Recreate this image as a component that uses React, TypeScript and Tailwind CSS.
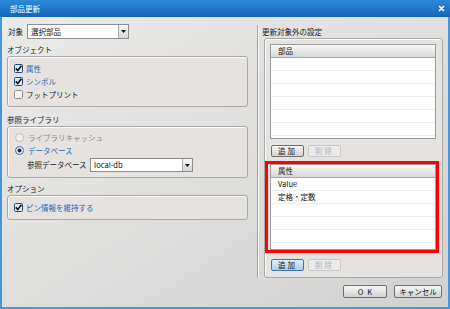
import React from "react";

const CheckBox = ({ checked }: { checked: boolean }) => (
    <svg width="9" height="9" viewBox="0 0 9 9" className="shrink-0">
        <rect x="0.5" y="0.5" width="8" height="8" rx="1" fill={checked ? "#dbe8f6" : "#f6f6f6"} stroke={checked ? "#234a7a" : "#8c8c8c"} />
        {checked && <path d="M1.8 4.4 L3.8 6.6 L7.4 1.8" fill="none" stroke="#111" strokeWidth="1.6" />}
    </svg>
);

const Radio = ({ checked, disabled }: { checked: boolean; disabled?: boolean }) => (
    <svg width="9" height="9" viewBox="0 0 9 9" className="shrink-0">
        <circle cx="4.5" cy="4.5" r="4" fill={disabled ? "#efefef" : "#e9eef5"} stroke={disabled ? "#bdbdbd" : "#4d6e96"} />
        {checked && <circle cx="4.5" cy="4.5" r="2" fill="#1b2b44" />}
    </svg>
);

const Select = ({ value, className }: { value: string; className: string }) => (
    <div className={"flex bg-white border border-[#8d8d8d] " + className}>
        <div className="flex-1 pl-[3px] flex items-center text-[#111]">{value}</div>
        <div className="w-[10px] border-l border-[#a8a8a8] bg-gradient-to-b from-[#f7f7f7] to-[#d6d6d6] flex items-center justify-center">
            <svg width="5" height="3" viewBox="0 0 5 3"><path d="M0 0 H5 L2.5 3 Z" fill="#111" /></svg>
        </div>
    </div>
);

const Btn = ({ label, kind, className }: { label: string; kind: "normal" | "disabled" | "focus"; className: string }) => {
    const look = {
        normal: "border-[#6f6f6f] bg-gradient-to-b from-[#f7f7f7] to-[#d3d3d3] text-[#111]",
        disabled: "border-[#c9c9c9] bg-[#ebebeb] text-[#b3b3b3]",
        focus: "border-[#3b78a8] bg-gradient-to-b from-[#e0eefb] to-[#a9cff0] text-[#111]",
    }[kind];
    return (
        <div className={"flex items-center justify-center border rounded-[2px] whitespace-nowrap " + look + " " + className}>
            {label}
        </div>
    );
};

const Table = ({ head, rows, className }: { head: string; rows: string[]; className: string }) => (
    <div className={"flex flex-col bg-white border border-[#9b9b9b] overflow-hidden " + className}>
        <div className="h-[13px] shrink-0 flex items-center pl-[7px] border-b border-[#a3a3a3] bg-gradient-to-b from-[#f9f9f9] to-[#d7d7d7] text-[#111]">{head}</div>
        {[0, 1, 2, 3, 4, 5].map((i) => (
            <div key={i} className="h-[13px] shrink-0 flex items-center pl-[7px] border-b border-[#ececec] text-[#111]">{rows[i] ?? ""}</div>
        ))}
    </div>
);

const Group = ({ children, className }: { children: React.ReactNode; className: string }) => (
    <div className={"border border-[#a9a9a9] rounded-[3px] bg-[#e6e2df] shadow-[inset_1px_1px_0_#fafafa] " + className}>{children}</div>
);

export default function App() {
    return (
        <div className="w-[450px] h-[309px] flex flex-col font-['Noto_Sans_CJK_JP',sans-serif] text-[7.5px] leading-none text-[#1a1a1a]">
            <div className="h-[17px] shrink-0 flex items-center justify-between pl-[10px] pr-[5px] bg-gradient-to-b from-[#2c89da] to-[#1366b7] text-white">
                <span>部品更新</span>
                <svg width="7" height="7" viewBox="0 0 7 7"><path d="M1 1 L6 6 M6 1 L1 6" stroke="#fff" strokeWidth="1.6" /></svg>
            </div>
            <div className="flex-1 flex flex-col border-2 border-t-0 border-[#4a95d8] bg-gradient-to-br from-[#ecebe9] to-[#d1d1d1] px-[5px]">
                <div className="h-[261px] flex">
                    {/* left */}
                    <div className="w-[241px] pt-[7px] flex flex-col">
                        <div className="h-[15px] flex items-center">
                            <span className="w-[20px] pl-[1px]">対象</span>
                            <Select value="選択部品" className="w-[102px] h-[15px]" />
                        </div>
                        <div className="mt-[5px] h-[12px] flex items-center">オブジェクト</div>
                        <Group className="h-[51px] pl-[6px] pt-[5px]">
                            <div className="h-[13px] flex items-center gap-[3px] text-[#2567b5]"><CheckBox checked /> 属性</div>
                            <div className="h-[13px] flex items-center gap-[3px] text-[#2567b5]"><CheckBox checked /> シンボル</div>
                            <div className="h-[13px] flex items-center gap-[3px]"><CheckBox checked={false} /> フットプリント</div>
                        </Group>
                        <div className="mt-[7px] h-[12px] flex items-center">参照ライブラリ</div>
                        <Group className="h-[52px] pl-[7px] pt-[4px]">
                            <div className="h-[13px] flex items-center gap-[4px] text-[#8c8c8c]"><Radio checked={false} disabled /> ライブラリキャッシュ</div>
                            <div className="h-[13px] flex items-center gap-[4px] text-[#2567b5]"><Radio checked /> データベース</div>
                            <div className="mt-[1px] h-[14px] flex items-center pl-[12px]">
                                <span className="w-[63px]">参照データベース</span>
                                <Select value="local-db" className="w-[103px] h-[14px]" />
                            </div>
                        </Group>
                        <div className="mt-[5px] h-[12px] flex items-center">オプション</div>
                        <Group className="h-[25px] pl-[6px] pt-[5px]">
                            <div className="h-[13px] flex items-center gap-[3px] text-[#2567b5]"><CheckBox checked /> ピン情報を維持する</div>
                        </Group>
                    </div>
                    {/* separator */}
                    <div className="ml-[9px] mt-[8px] w-[2px] border-l border-[#a2a2a2] bg-[#f7f7f7]" />
                    {/* right */}
                    <div className="ml-[5px] w-[179px] pt-[9px] flex flex-col">
                        <div className="h-[12px] flex items-center -ml-[2px]">更新対象外の設定</div>
                        <Group className="h-[240px] flex flex-col pt-[5px]">
                            <Table head="部品" rows={[]} className="ml-[5px] w-[166px] h-[95px]" />
                            <div className="mt-[6px] ml-[6px] flex gap-[4px]">
                                <Btn label="追加" kind="normal" className="w-[33px] h-[12px] tracking-[2px]" />
                                <Btn label="削除" kind="disabled" className="w-[33px] h-[12px] tracking-[2px]" />
                            </div>
                            <div className="mt-[4px] w-[174px] h-[92px] border-[3px] border-[#ff0000] pl-[2px]">
                                <Table head="属性" rows={["Value", "定格・定数"]} className="w-[166px] h-[86px]" />
                            </div>
                            <div className="mt-[6px] ml-[6px] flex gap-[4px]">
                                <Btn label="追加" kind="focus" className="w-[33px] h-[12px] tracking-[2px]" />
                                <Btn label="削除" kind="disabled" className="w-[33px] h-[12px] tracking-[2px]" />
                            </div>
                        </Group>
                    </div>
                </div>
                <div className="mt-[7px] flex justify-end gap-[7px] pr-[1px]">
                    <Btn label="OK" kind="normal" className="w-[44px] h-[13px] tracking-[4px] pl-[4px]" />
                    <Btn label="キャンセル" kind="normal" className="w-[48px] h-[13px]" />
                </div>
            </div>
        </div>
    );
}
